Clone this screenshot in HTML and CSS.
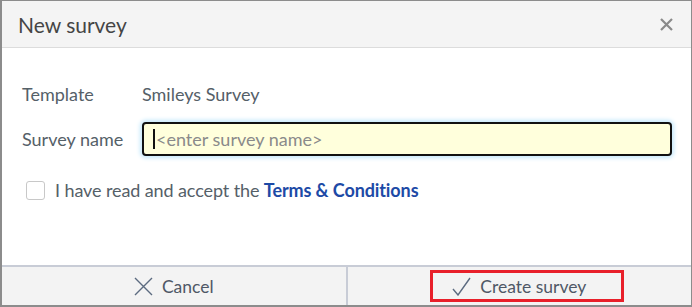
FILE: index.html
```html
<!DOCTYPE html>
<html lang="en">
<head>
    <meta charset="UTF-8">
    <meta name="viewport" content="width=device-width, initial-scale=1.0">
    <title>New survey</title>
    <link rel="stylesheet" href="styles.css">
</head>
<body>

    <div class="dialog">
        <div class="dialog-header">
            <span class="dialog-title">New survey</span>
            <svg class="dialog-close" width="13" height="13" viewBox="0 0 13 13">
                <path d="M1 1 L12 12 M12 1 L1 12" stroke="#8a8a8a" stroke-width="2.2" fill="none"/>
            </svg>
        </div>

        <div class="dialog-body">
            <div class="form-row">
                <label class="form-label">Template</label>
                <span class="form-value">Smileys Survey</span>
            </div>
            <div class="form-row">
                <label class="form-label" for="survey-name">Survey name</label>
                <div class="input-wrap">
                    <span class="caret"></span>
                    <input id="survey-name" class="form-input" type="text" placeholder="<enter survey name>">
                </div>
            </div>
            <div class="terms-row">
                <span class="checkbox"></span>
                <span class="terms-text">I have read and accept the <a href="#" class="terms-link">Terms &amp; Conditions</a></span>
            </div>
        </div>

        <div class="dialog-footer">
            <div class="footer-btn">
                <svg class="btn-icon" width="19" height="19" viewBox="0 0 19 19">
                    <path d="M1 1 L18 18 M18 1 L1 18" stroke="#5c6b80" stroke-width="1.4" fill="none"/>
                </svg>
                <span>Cancel</span>
            </div>
            <div class="footer-btn">
                <div class="btn-highlight">
                    <svg class="btn-icon" width="19" height="19" viewBox="0 0 19 19">
                        <path d="M1 12 L6 18 L18 1" stroke="#5c6b80" stroke-width="1.4" fill="none"/>
                    </svg>
                    <span>Create survey</span>
                </div>
            </div>
        </div>
    </div>

</body>
</html>
```

FILE: styles.css
```css
body {
  margin: 0;
  font-family: Lato, "Noto Sans", sans-serif;
  background-color: #ffffff;
}

.dialog {
  width: 692px;
  height: 307px;
  box-sizing: border-box;
  border: 1px solid #8c8c8c;
  border-left-width: 2px;
  border-bottom-width: 2px;
  display: flex;
  flex-direction: column;
}

.dialog-header {
  height: 46px;
  background-color: #f4f4f4;
  border-bottom: 1px solid #dcdcdc;
  display: flex;
  align-items: center;
  justify-content: space-between;
  padding: 0 18px 0 16px;
}

.dialog-title {
  font-size: 21px;
  color: #454545;
}

.dialog-body {
  flex: 1;
  padding: 35px 19px 0 20px;
}

.form-row {
  display: flex;
  align-items: center;
  margin-bottom: 9px;
  font-size: 18px;
  color: #556068;
}

.form-row:first-child {
  margin-bottom: 17px;
}

.form-label {
  width: 120px;
}

.input-wrap {
  flex: 1;
  position: relative;
}

.form-input {
  width: 100%;
  height: 34px;
  box-sizing: border-box;
  background-color: #ffffdc;
  border: 2px solid #111111;
  border-radius: 4px;
  box-shadow: 0 0 4px 2px #c4e8fb;
  padding: 0 12px;
  font-family: Lato, "Noto Sans", sans-serif;
  font-size: 18px;
  outline: none;
}

.form-input::placeholder {
  color: #8a8a8a;
}

.caret {
  position: absolute;
  left: 11px;
  top: 7px;
  width: 2px;
  height: 20px;
  background-color: #111111;
}

.terms-row {
  display: flex;
  align-items: center;
  margin-top: 23px;
  padding-left: 4px;
  font-size: 18px;
  letter-spacing: -0.1px;
  color: #556068;
}

.checkbox {
  width: 17px;
  height: 17px;
  border: 1px solid #c8c8c8;
  border-radius: 3px;
  margin-right: 10px;
}

.terms-link {
  color: #1d4aa6;
  font-weight: bold;
  text-decoration: none;
}

.dialog-footer {
  height: 38px;
  background-color: #f3f3f3;
  border-top: 2px solid #c8ccd6;
  display: flex;
}

.footer-btn {
  flex: 1;
  display: flex;
  align-items: center;
  justify-content: center;
  gap: 9px;
  font-size: 17.5px;
  color: #4f5866;
}

.footer-btn + .footer-btn {
  border-left: 2px solid #c8ccd6;
}

.btn-highlight {
  display: flex;
  align-items: center;
  gap: 9px;
  height: 26px;
  margin-left: 16px;
  padding: 0 35px 0 19px;
  border: 3px solid #e8202a;
}
```
